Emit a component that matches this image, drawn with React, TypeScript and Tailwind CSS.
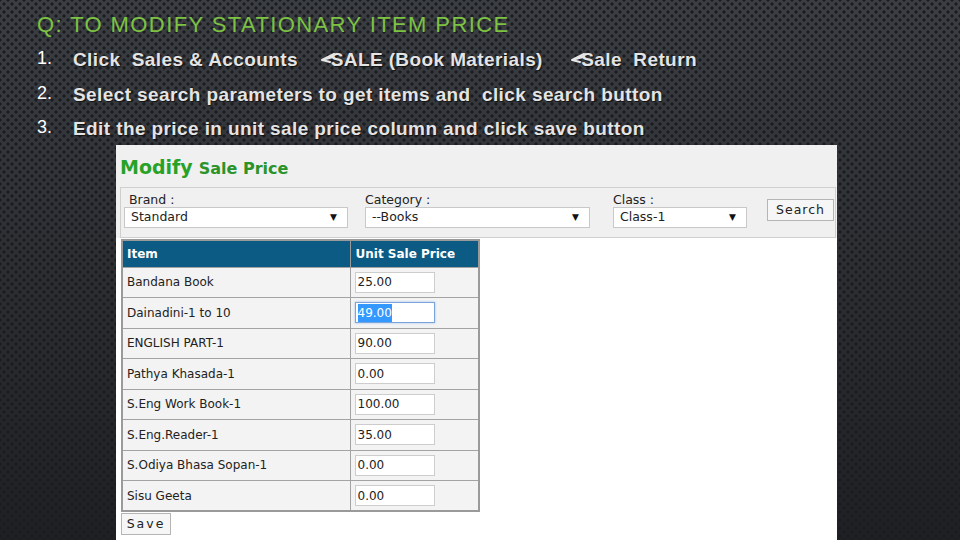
import React from 'react';

const steps = [
  { n: '1.', parts: 'first' },
  { n: '2.', parts: 'Select search parameters to get items and  click search button' },
  { n: '3.', parts: 'Edit the price in unit sale price column and click save button' },
];

const items = [
  { name: 'Bandana Book', price: '25.00' },
  { name: 'Dainadini-1 to 10', price: '49.00', focused: true },
  { name: 'ENGLISH PART-1', price: '90.00' },
  { name: 'Pathya Khasada-1', price: '0.00' },
  { name: 'S.Eng Work Book-1', price: '100.00' },
  { name: 'S.Eng.Reader-1', price: '35.00' },
  { name: 'S.Odiya Bhasa Sopan-1', price: '0.00' },
  { name: 'Sisu Geeta', price: '0.00' },
];

function Arrow() {
  // the little wingdings-like pointer in the original slide
  return (
    <svg width="14" height="12" viewBox="0 0 14 12" className="inline-block -mr-[4px] relative top-[-2px]">
      <path d="M13 1 L1 7 L9 9 M1 7 L12 4" fill="none" stroke="#e6e6e6" strokeWidth="2" strokeLinejoin="round" strokeLinecap="round" />
    </svg>
  );
}

function Select({ value, width }: { value: string; width: string }) {
  return (
    <div className={`${width} h-[21px] bg-white border border-[#c8c8c8] flex items-center justify-between pl-[6px] pr-[10px] text-[12.5px] text-[#222]`}>
      <span>{value}</span>
      <span className="text-[9px] text-[#111]">▼</span>
    </div>
  );
}

export default function App() {
  return (
    <div
      className="w-[960px] h-[540px] overflow-hidden flex flex-col bg-[radial-gradient(circle,#1b1c1f_1.4px,transparent_1.8px),radial-gradient(circle,#1b1c1f_1.4px,transparent_1.8px),linear-gradient(to_bottom,#3b3e43,#2c2e32_50%,#1f2024)] [background-size:8px_8px,8px_8px,100%_100%] [background-position:0_0,4px_4px,0_0]"
      style={{ fontFamily: '"Liberation Sans", Arial, sans-serif' }}
    >
      {/* Title */}
      <div className="pl-[37px] pt-[12px] pb-[5px] text-[22px] leading-[26px] tracking-[1.4px] text-[#7cc243]">
        Q: TO MODIFY STATIONARY ITEM PRICE
      </div>

      {/* Steps */}
      {steps.map((s, i) => (
        <div key={s.n} className={`flex items-center pl-[37px] ${i === 2 ? 'h-[32px]' : 'h-[35px]'}`}>
          <span className="w-[36px] text-[18px] text-white relative top-[-2px]">{s.n}</span>
          <span className="text-[19px] tracking-[0.4px] font-bold text-[#e4e4e4] [text-shadow:1px_1px_1px_#111] whitespace-pre">
            {s.parts === 'first' ? (
              <>
                Click  Sales &amp; Accounts{'    '}
                <Arrow />SALE (Book Materials){'     '}
                <Arrow />Sale  Return
              </>
            ) : (
              s.parts
            )}
          </span>
        </div>
      ))}

      {/* Screenshot panel */}
      <div
        className="ml-[116px] w-[721px] flex-1 flex flex-col bg-white"
        style={{ fontFamily: '"DejaVu Sans", Tahoma, sans-serif' }}
      >
        <div className="bg-[#f0f0f0] flex flex-col">
          <div className="h-[42px] flex items-end pl-[4px] pb-[6px] gap-[6px] font-bold">
            <span className="text-[19px] text-[#27a227]">Modify</span>
            <span className="text-[16px] text-[#2a932a]">Sale Price</span>
          </div>
          <div className="ml-[4px] mr-[1px] h-[51px] border border-[#cfcfcf] flex items-start pt-[4px] pl-[3px] text-[12.5px] text-[#222]">
            <div className="flex flex-col">
              <span className="pl-[5px] leading-[15px]">Brand :</span>
              <Select value="Standard" width="w-[224px]" />
            </div>
            <div className="flex flex-col ml-[17px]">
              <span className="leading-[15px]">Category :</span>
              <Select value="--Books" width="w-[225px]" />
            </div>
            <div className="flex flex-col ml-[23px]">
              <span className="leading-[15px]">Class :</span>
              <Select value="Class-1" width="w-[134px]" />
            </div>
            <button className="ml-[20px] mt-[7px] w-[67px] h-[22px] bg-[#f6f6f6] border border-[#b5b5b5] text-[12.5px] tracking-[1px] text-[#222]">
              Search
            </button>
          </div>
        </div>

        <div className="pl-[5px] pt-[1px] flex flex-col items-start">
          <table className="w-[359px] border-collapse border-2 border-[#9a9a9a] text-[12px] text-[#222]">
            <thead>
              <tr className="h-[27px] bg-[#0b5b84] text-white text-left">
                <th className="w-[228px] pl-[4px] font-bold border-r border-[#9a9a9a]">Item</th>
                <th className="pl-[5px] font-bold">Unit Sale Price</th>
              </tr>
            </thead>
            <tbody>
              {items.map((it) => (
                <tr key={it.name} className="h-[30.5px] bg-[#f3f3f3] border-t border-[#a3a3a3]">
                  <td className="pl-[4px] border-r border-[#a3a3a3]">{it.name}</td>
                  <td className="pl-[4px]">
                    <div
                      className={`w-[80px] h-[21px] bg-white flex items-center pl-[2px] ${
                        it.focused ? 'border border-[#7aa4dc] shadow-[0_0_2px_#9cc0ee]' : 'border border-[#cdcdcd]'
                      }`}
                    >
                      {it.focused ? <span className="bg-[#3399ff] text-white">{it.price}</span> : it.price}
                    </div>
                  </td>
                </tr>
              ))}
            </tbody>
          </table>
          <button className="mt-[1px] w-[50px] h-[22px] bg-[#f6f6f6] border border-[#b5b5b5] text-[12.5px] tracking-[2px] text-[#222]">
            Save
          </button>
        </div>
      </div>
    </div>
  );
}
